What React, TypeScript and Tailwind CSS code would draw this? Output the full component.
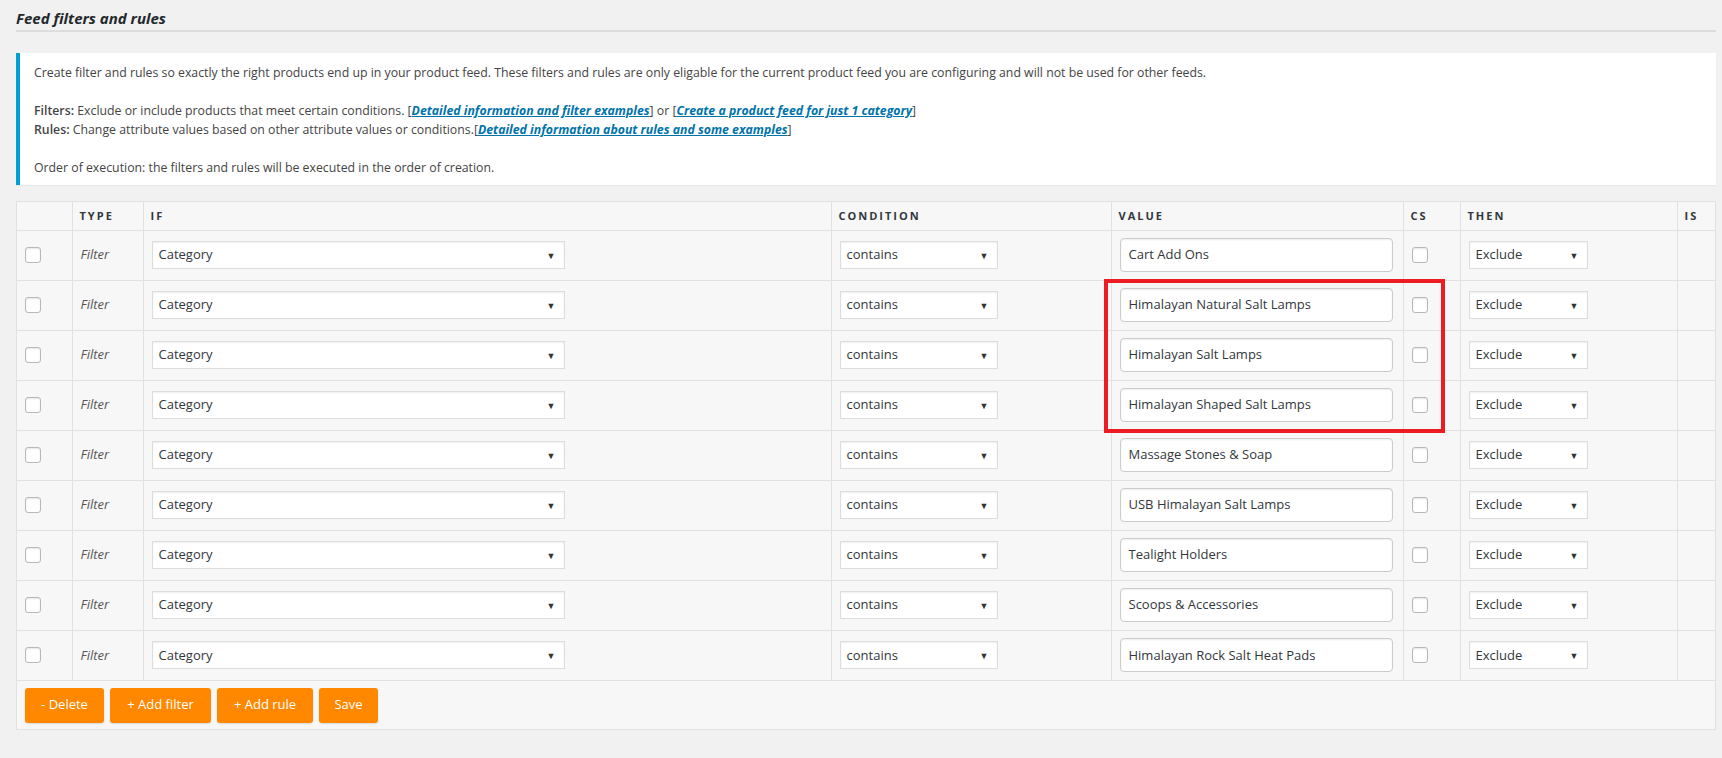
import React from 'react';

const VALUES = [
  'Cart Add Ons',
  'Himalayan Natural Salt Lamps',
  'Himalayan Salt Lamps',
  'Himalayan Shaped Salt Lamps',
  'Massage Stones & Soap',
  'USB Himalayan Salt Lamps',
  'Tealight Holders',
  'Scoops & Accessories',
  'Himalayan Rock Salt Heat Pads',
];

const BUTTONS = [
  { label: '- Delete', w: 'w-[79px]' },
  { label: '+ Add filter', w: 'w-[101px]' },
  { label: '+ Add rule', w: 'w-[96px]' },
  { label: 'Save', w: 'w-[59px]' },
];

const FONT = '[font-family:"Open_Sans","Noto_Sans",sans-serif]';

function Checkbox() {
  return (
    <span className="block h-4 w-4 rounded-[3px] border border-[#b4b9be] bg-white shadow-[inset_0_1px_2px_rgba(0,0,0,0.1)]" />
  );
}

function FakeSelect({ label, width }: { label: string; width: string }) {
  return (
    <div
      className={`flex h-[28px] items-center justify-between border border-[#dddddd] bg-white pl-[6px] pr-[8px] text-[13px] text-[#32373c] shadow-[inset_0_1px_2px_rgba(0,0,0,0.07)] ${width}`}
    >
      <span>{label}</span>
      <span className="text-[9px] leading-none text-[#333]">▼</span>
    </div>
  );
}

function Th({ children }: { children?: React.ReactNode }) {
  return (
    <th className="h-[28px] border border-[#e1e1e1] px-[7px] text-left align-middle text-[11px] font-bold uppercase tracking-[2px] text-[#32373c]">
      {children}
    </th>
  );
}

export default function App() {
  return (
    <div className={`min-h-[758px] bg-[#f1f1f1] pl-4 pt-[8px] text-[#444] ${FONT}`}>
      <div className="w-[1700px]">
        <h2 className="border-b-2 border-[#dddddd] pb-[2px] text-[15px] font-bold italic leading-[20px] text-[#23282d]">
          Feed filters and rules
        </h2>

        {/* notice */}
        <div className="mt-[21px] border-l-4 border-[#00a0d2] bg-white pb-[8px] pl-[14px] pr-3 pt-[10px] text-[12.3px] leading-[19px] shadow-[0_1px_1px_rgba(0,0,0,0.04)]">
          <p>
            Create filter and rules so exactly the right products end up in your product feed. These filters and rules are only eligable for the current product feed you are configuring and will not be used for other feeds.
          </p>
          <p>&nbsp;</p>
          <p>
            <strong className="font-semibold">Filters:</strong> Exclude or include products that meet certain conditions. [
            <a className="font-bold italic text-[#0073aa] underline">Detailed information and filter examples</a>] or [
            <a className="font-bold italic text-[#0073aa] underline">Create a product feed for just 1 category</a>]
          </p>
          <p>
            <strong className="font-semibold">Rules:</strong> Change attribute values based on other attribute values or conditions.[
            <a className="font-bold italic text-[#0073aa] underline">Detailed information about rules and some examples</a>]
          </p>
          <p>&nbsp;</p>
          <p>Order of execution: the filters and rules will be executed in the order of creation.</p>
        </div>

        {/* rules table */}
        <div className="relative mt-4 border border-[#e1e1e1] bg-[#f7f7f7]">
          <table className="w-full table-fixed border-collapse border-hidden">
            <colgroup>
              <col className="w-[55px]" />
              <col className="w-[71px]" />
              <col className="w-[688px]" />
              <col className="w-[280px]" />
              <col className="w-[292px]" />
              <col className="w-[57px]" />
              <col className="w-[217px]" />
              <col />
            </colgroup>
            <thead>
              <tr>
                <Th />
                <Th>Type</Th>
                <Th>If</Th>
                <Th>Condition</Th>
                <Th>Value</Th>
                <Th>CS</Th>
                <Th>Then</Th>
                <Th>Is</Th>
              </tr>
            </thead>
            <tbody>
              {VALUES.map(v => (
                <tr key={v} className="h-[50px]">
                  <td className="border border-[#e1e1e1] px-2">
                    <Checkbox />
                  </td>
                  <td className="border border-[#e1e1e1] px-2 text-[13px] italic text-[#555]">Filter</td>
                  <td className="border border-[#e1e1e1] px-2">
                    <FakeSelect label="Category" width="w-[413px]" />
                  </td>
                  <td className="border border-[#e1e1e1] px-2">
                    <FakeSelect label="contains" width="w-[158px]" />
                  </td>
                  <td className="border border-[#e1e1e1] px-2">
                    <div className="flex h-[34px] w-[273px] items-center rounded-[4px] border border-[#cccccc] bg-white px-2 text-[13px] text-[#32373c] shadow-[inset_0_1px_2px_rgba(0,0,0,0.07)]">
                      {v}
                    </div>
                  </td>
                  <td className="border border-[#e1e1e1] px-2">
                    <Checkbox />
                  </td>
                  <td className="border border-[#e1e1e1] px-2">
                    <FakeSelect label="Exclude" width="w-[119px]" />
                  </td>
                  <td className="border border-[#e1e1e1]" />
                </tr>
              ))}
            </tbody>
          </table>

          <div className="flex h-[49px] items-center gap-[6px] border-t border-[#e1e1e1] pl-2">
            {BUTTONS.map(b => (
              <button
                key={b.label}
                className={`h-[35px] rounded-[3px] bg-[#ff8800] text-[13px] text-white shadow-[0_1px_2px_rgba(0,0,0,0.12)] ${b.w}`}
              >
                {b.label}
              </button>
            ))}
          </div>

          {/* highlight annotation */}
          <div className="pointer-events-none absolute left-[1087px] top-[77px] h-[154px] w-[341px] border-4 border-[#ed1c24]" />
        </div>
      </div>
    </div>
  );
}
